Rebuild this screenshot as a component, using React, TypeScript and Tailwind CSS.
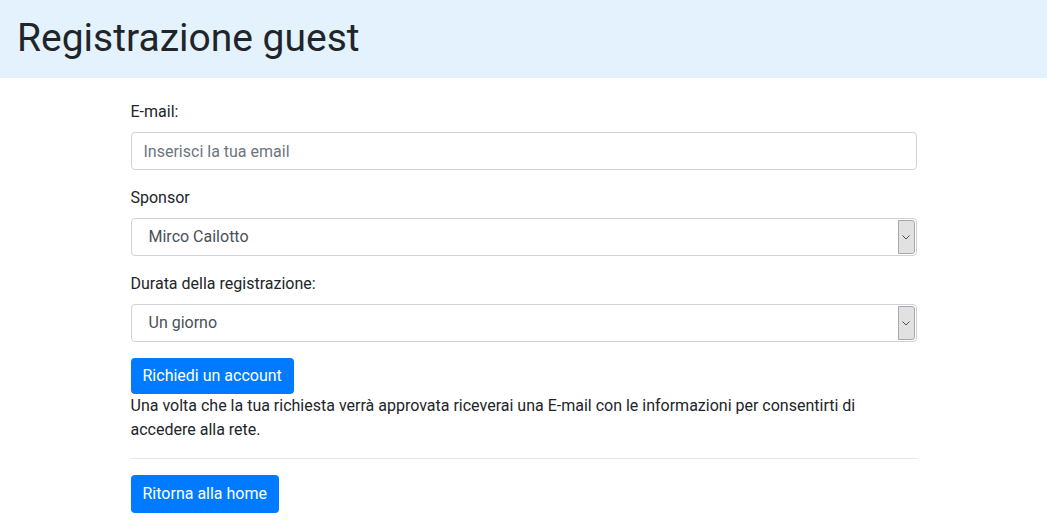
import React from "react"

const font = { fontFamily: "Roboto, 'Noto Sans', sans-serif" }

function FakeSelect({ value }: { value: string }) {
  return (
    <div className="flex h-[38px] w-full items-stretch rounded border border-[#ced4da] bg-white text-[16px] text-[#495057]">
      <div className="flex flex-1 items-center pl-[17px]">{value}</div>
      <div className="my-px mr-px flex w-[17px] items-center justify-center rounded-r-[3px] border border-[#a9a9a9] bg-[#e1e1e1]">
        <svg width="8" height="5" viewBox="0 0 8 5" fill="none">
          <path d="M0.5 0.5 L4 4 L7.5 0.5" stroke="#505050" strokeWidth="1" />
        </svg>
      </div>
    </div>
  )
}

export default function App() {
  return (
    <div className="min-h-screen bg-white text-[#212529]" style={font}>
      <header className="h-[78px] bg-[#e3f2fd] pl-[17px] pt-[14px]">
        <h1 className="text-[39px] leading-[48px] font-normal">Registrazione guest</h1>
      </header>

      <main className="mx-auto w-[786px] pt-[22px] text-[16px] leading-6">
        <div className="mb-4">
          <label className="mb-2 block">E-mail:</label>
          <input
            type="text"
            placeholder="Inserisci la tua email"
            className="h-[38px] w-full rounded border border-[#ced4da] px-3 text-[#495057] placeholder:text-[#6c757d] outline-none"
          />
        </div>

        <div className="mb-4">
          <label className="mb-2 block">Sponsor</label>
          <FakeSelect value="Mirco Cailotto" />
        </div>

        <div className="mb-4">
          <label className="mb-2 block">Durata della registrazione:</label>
          <FakeSelect value="Un giorno" />
        </div>

        <button className="h-9 rounded bg-[#007bff] px-3 text-white">Richiedi un account</button>
        <p>
          Una volta che la tua richiesta verrà approvata riceverai una E-mail con le informazioni per
          consentirti di accedere alla rete.
        </p>

        <hr className="mt-4 mb-4 border-t border-[rgba(0,0,0,0.1)]" />

        <button className="h-[38px] rounded bg-[#007bff] px-3 text-white">Ritorna alla home</button>
      </main>
    </div>
  )
}
